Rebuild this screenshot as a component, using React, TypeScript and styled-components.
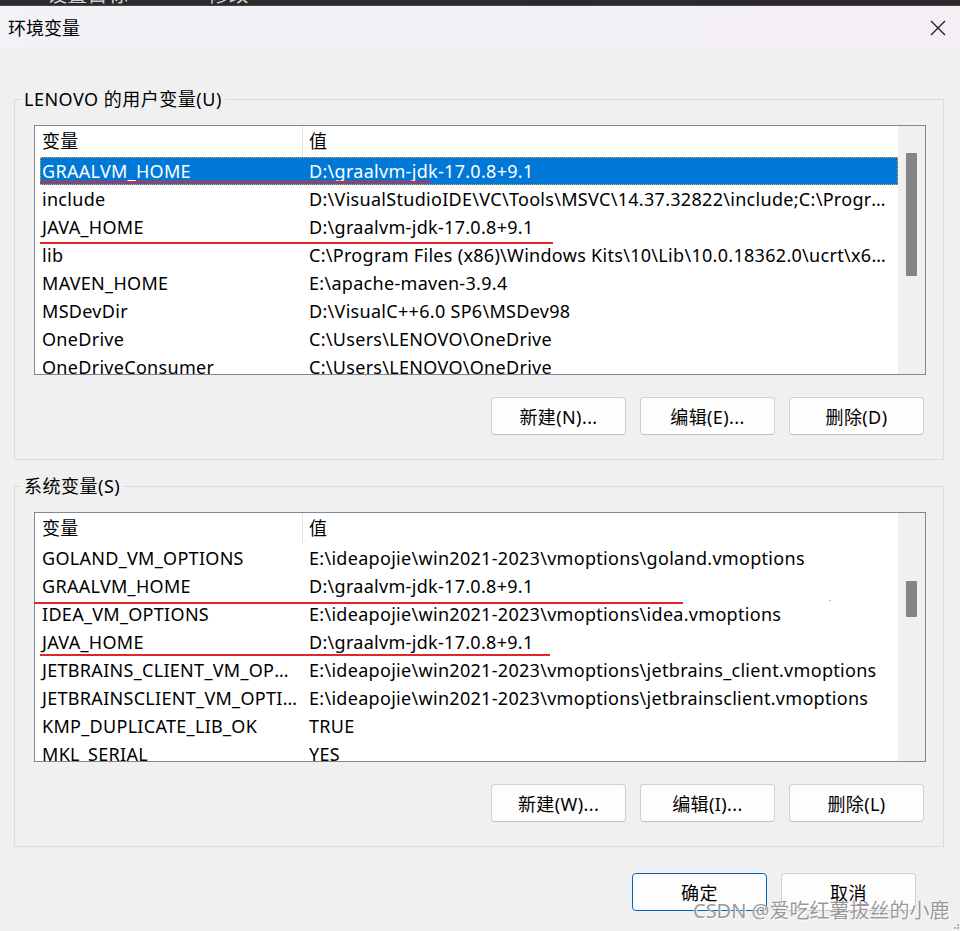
import styled, { createGlobalStyle } from 'styled-components'

const GlobalStyle = createGlobalStyle`
  html, body {
    margin: 0;
    padding: 0;
    background: #f0f0f0;
  }
  * {
    box-sizing: border-box;
  }
`

const FONT = `"Noto Sans", "Noto Sans CJK SC", sans-serif`

const Page = styled.div`
  position: relative;
  width: 960px;
  height: 931px;
  overflow: hidden;
  font-family: ${FONT};
  font-size: 18px;
  letter-spacing: 0.3px;
  color: #000;
  background: #f0f0f0;
`

const TopStrip = styled.div`
  height: 6px;
  background: #2b2b2b;
  border-bottom: 1px solid #454545;
  overflow: hidden;
  display: flex;
  gap: 80px;
  padding-left: 47px;
  color: #cfcfcf;
  font-size: 20px;
  line-height: 20px;
  span {
    margin-top: -15px;
  }
`

const Dialog = styled.div`
  background: #f0f0f0;
  border-top-right-radius: 8px;
  overflow: hidden;
`

const TitleBar = styled.div`
  height: 43px;
  display: flex;
  align-items: center;
  justify-content: space-between;
  padding: 0 14px 0 8px;
  background: linear-gradient(90deg, #f2f2f7 0%, #f3f1f7 60%, #f5eef5 100%);
`

const Title = styled.div`
  font-size: 18px;
  line-height: 24px;
  letter-spacing: 0;
`

const Body = styled.div`
  padding: 38px 16px 0 14px;
`

const Group = styled.fieldset<{ $gap?: number }>`
  margin: ${p => p.$gap ?? 0}px 0 0 0;
  padding: 14px 17px 24px 19px;
  border: 1px solid #dcdcdc;
  min-width: 0;
`

const Legend = styled.legend`
  margin-left: -13px;
  padding: 0 3px;
  line-height: 24px;
  font-size: 18px;
  letter-spacing: 0.5px;
`

const ListBox = styled.div`
  height: 250px;
  border: 1px solid #828790;
  background: #fff;
  display: grid;
  grid-template-columns: 1fr 27px;
  overflow: hidden;
`

const TableArea = styled.div`
  overflow: hidden;
  min-width: 0;
`

const HeaderRow = styled.div`
  height: 31px;
  display: grid;
  grid-template-columns: 267px 1px 1fr;
  line-height: 30px;
`

const HeaderCell = styled.div<{ $pad: number }>`
  padding-left: ${p => p.$pad}px;
`

const HeaderSep = styled.div`
  background: #e5e5e5;
`

const Row = styled.div<{ $selected?: boolean }>`
  height: 28px;
  margin-left: 5px;
  display: grid;
  grid-template-columns: 262px 1fr;
  line-height: 28px;
  white-space: nowrap;
  background: ${p => (p.$selected ? '#0078d7' : 'transparent')};
  color: ${p => (p.$selected ? '#fff' : '#000')};
  outline: ${p => (p.$selected ? '1px dotted #f2a33a' : 'none')};
  outline-offset: -1px;
`

const NameCell = styled.div`
  padding: 0 4px 0 2px;
  overflow: hidden;
  text-overflow: ellipsis;
`

const ValueCell = styled.div`
  padding: 0 8px 0 7px;
  overflow: hidden;
  text-overflow: ellipsis;
`

const ScrollTrack = styled.div`
  background: #f0f0f0;
  padding-left: 8px;
`

const Thumb = styled.div<{ $top: number; $h: number }>`
  width: 11px;
  margin-top: ${p => p.$top}px;
  height: ${p => p.$h}px;
  background: #858585;
  border-radius: 1px;
`

const ButtonRow = styled.div<{ $right?: number; $top: number }>`
  display: flex;
  justify-content: flex-end;
  gap: 14px;
  margin-top: ${p => p.$top}px;
  padding-right: ${p => p.$right ?? 2}px;
`

const Button = styled.button<{ $primary?: boolean }>`
  width: 135px;
  height: 38px;
  border-radius: 4px;
  border: 1px solid ${p => (p.$primary ? '#0067c0' : '#d0d0d0')};
  border-bottom-color: ${p => (p.$primary ? '#0067c0' : '#c0c0c0')};
  background: #fdfdfd;
  font-family: ${FONT};
  font-size: 18px;
  letter-spacing: 0.4px;
  color: #000;
  padding: 0;
`

const RedLine = styled.div<{ $x: number; $y: number; $w: number }>`
  position: absolute;
  left: ${p => p.$x}px;
  top: ${p => p.$y}px;
  width: ${p => p.$w}px;
  height: 1.5px;
  background: #e3242b;
`

const Dot = styled.div`
  position: absolute;
  left: 829px;
  top: 600px;
  width: 2px;
  height: 1px;
  background: #f4a0a8;
`

const Watermark = styled.div`
  position: absolute;
  left: 693px;
  top: 898px;
  font-size: 20px;
  line-height: 26px;
  letter-spacing: 0;
  white-space: nowrap;
  color: rgba(120, 120, 120, 0.75);
  text-shadow: 0 0 1px #fff, 1px 1px 0 rgba(255, 255, 255, 0.8);
`

const Grip = styled.svg`
  position: absolute;
  right: 0;
  bottom: 0;
`

type Pair = [string, string]

const userVars: Pair[] = [
  ['GRAALVM_HOME', 'D:\\graalvm-jdk-17.0.8+9.1'],
  ['include', 'D:\\VisualStudioIDE\\VC\\Tools\\MSVC\\14.37.32822\\include;C:\\Program Files (x86)\\Windows Kits\\10\\Include'],
  ['JAVA_HOME', 'D:\\graalvm-jdk-17.0.8+9.1'],
  ['lib', 'C:\\Program Files (x86)\\Windows Kits\\10\\Lib\\10.0.18362.0\\ucrt\\x64;D:\\VisualStudioIDE'],
  ['MAVEN_HOME', 'E:\\apache-maven-3.9.4'],
  ['MSDevDir', 'D:\\VisualC++6.0 SP6\\MSDev98'],
  ['OneDrive', 'C:\\Users\\LENOVO\\OneDrive'],
  ['OneDriveConsumer', 'C:\\Users\\LENOVO\\OneDrive'],
]

const sysVars: Pair[] = [
  ['GOLAND_VM_OPTIONS', 'E:\\ideapojie\\win2021-2023\\vmoptions\\goland.vmoptions'],
  ['GRAALVM_HOME', 'D:\\graalvm-jdk-17.0.8+9.1'],
  ['IDEA_VM_OPTIONS', 'E:\\ideapojie\\win2021-2023\\vmoptions\\idea.vmoptions'],
  ['JAVA_HOME', 'D:\\graalvm-jdk-17.0.8+9.1'],
  ['JETBRAINS_CLIENT_VM_OPTIONS', 'E:\\ideapojie\\win2021-2023\\vmoptions\\jetbrains_client.vmoptions'],
  ['JETBRAINSCLIENT_VM_OPTIONS', 'E:\\ideapojie\\win2021-2023\\vmoptions\\jetbrainsclient.vmoptions'],
  ['KMP_DUPLICATE_LIB_OK', 'TRUE'],
  ['MKL_SERIAL', 'YES'],
]

const VarList = ({ rows, selected, thumbTop, thumbH }: { rows: Pair[]; selected?: number; thumbTop: number; thumbH: number }) => (
  <ListBox>
    <TableArea>
      <HeaderRow>
        <HeaderCell $pad={7}>变量</HeaderCell>
        <HeaderSep />
        <HeaderCell $pad={6}>值</HeaderCell>
      </HeaderRow>
      {rows.map(([k, v], i) => (
        <Row key={k + i} $selected={i === selected}>
          <NameCell>{k}</NameCell>
          <ValueCell>{v}</ValueCell>
        </Row>
      ))}
    </TableArea>
    <ScrollTrack>
      <Thumb $top={thumbTop} $h={thumbH} />
    </ScrollTrack>
  </ListBox>
)

const CloseIcon = () => (
  <svg width="16" height="16" viewBox="0 0 16 16">
    <path d="M1 1 L15 15 M15 1 L1 15" stroke="#1b1b1b" strokeWidth="1.3" fill="none" />
  </svg>
)

export default function App() {
  return (
    <Page>
      <GlobalStyle />
      <TopStrip>
        <span>设置目标</span>
        <span>修改</span>
      </TopStrip>
      <Dialog>
        <TitleBar>
          <Title>环境变量</Title>
          <CloseIcon />
        </TitleBar>
        <Body>
          <Group>
            <Legend>LENOVO 的用户变量(U)</Legend>
            <VarList rows={userVars} selected={0} thumbTop={27} thumbH={123} />
            <ButtonRow $top={22}>
              <Button>新建(N)...</Button>
              <Button>编辑(E)...</Button>
              <Button>删除(D)</Button>
            </ButtonRow>
          </Group>
          <Group $gap={14}>
            <Legend>系统变量(S)</Legend>
            <VarList rows={sysVars} thumbTop={68} thumbH={36} />
            <ButtonRow $top={22}>
              <Button>新建(W)...</Button>
              <Button>编辑(I)...</Button>
              <Button>删除(L)</Button>
            </ButtonRow>
          </Group>
          <ButtonRow $top={26} $right={28}>
            <Button $primary>确定</Button>
            <Button>取消</Button>
          </ButtonRow>
        </Body>
      </Dialog>

      <RedLine $x={40} $y={181} $w={390} />
      <RedLine $x={40} $y={242} $w={513} />
      <RedLine $x={34} $y={602} $w={649} />
      <RedLine $x={40} $y={654} $w={510} />
      <Dot />

      <Watermark>CSDN @爱吃红薯拔丝的小鹿</Watermark>
      <Grip width="12" height="8" viewBox="0 0 12 8">
        <rect x="9" y="1" width="2" height="2" fill="#b0b0b0" />
        <rect x="6" y="4" width="2" height="2" fill="#b0b0b0" />
        <rect x="9" y="4" width="2" height="2" fill="#b0b0b0" />
      </Grip>
    </Page>
  )
}
